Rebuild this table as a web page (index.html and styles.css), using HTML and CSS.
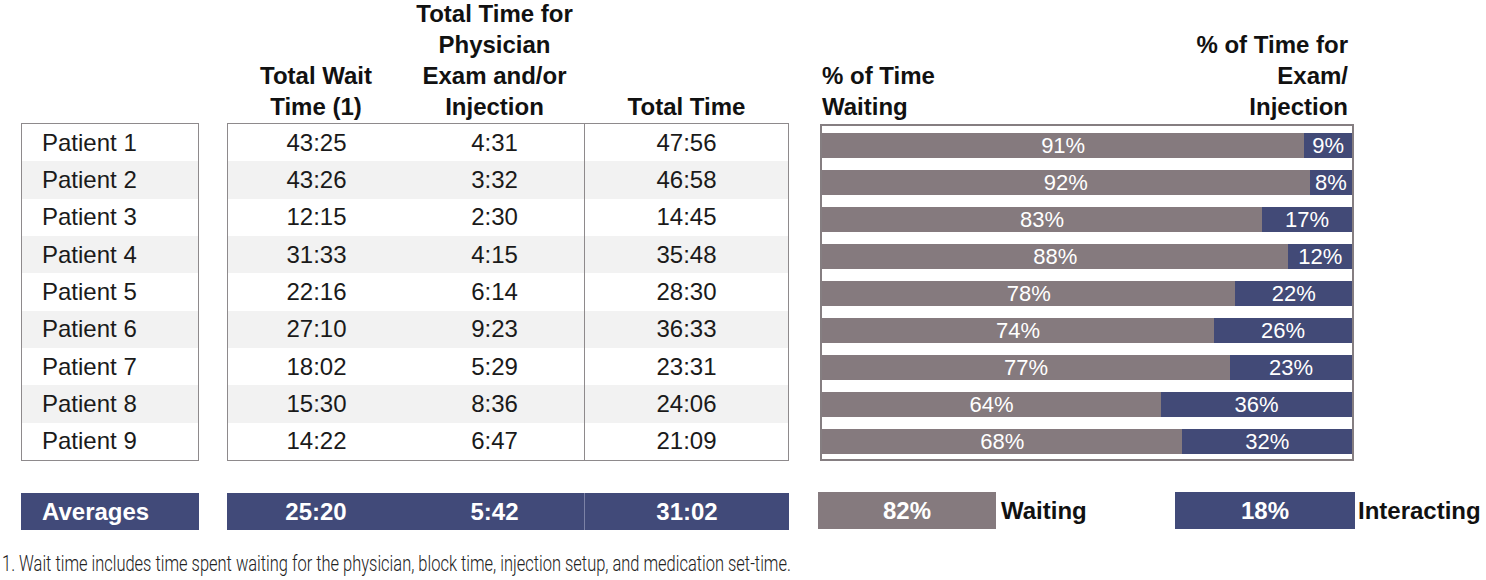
FILE: index.html
```html
<!DOCTYPE html>
<html>
<head>
<meta charset="utf-8">
<link rel="stylesheet" href="styles.css">
</head>
<body>
<div class="chart">
  <div class="col col-names">
    <div class="head"></div>
    <div class="box names">
      <div class="row">Patient 1</div>
      <div class="row">Patient 2</div>
      <div class="row">Patient 3</div>
      <div class="row">Patient 4</div>
      <div class="row">Patient 5</div>
      <div class="row">Patient 6</div>
      <div class="row">Patient 7</div>
      <div class="row">Patient 8</div>
      <div class="row">Patient 9</div>
    </div>
    <div class="avg avg-name">Averages</div>
  </div>

  <div class="col col-times">
    <div class="head head-times">
      <div class="htext c1">Total Wait<br>Time (1)</div>
      <div class="htext c2">Total Time for<br>Physician<br>Exam and/or<br>Injection</div>
      <div class="htext c3">Total Time</div>
    </div>
    <div class="box times">
      <div class="row trow"><span>43:25</span><span>4:31</span><span>47:56</span></div>
      <div class="row trow"><span>43:26</span><span>3:32</span><span>46:58</span></div>
      <div class="row trow"><span>12:15</span><span>2:30</span><span>14:45</span></div>
      <div class="row trow"><span>31:33</span><span>4:15</span><span>35:48</span></div>
      <div class="row trow"><span>22:16</span><span>6:14</span><span>28:30</span></div>
      <div class="row trow"><span>27:10</span><span>9:23</span><span>36:33</span></div>
      <div class="row trow"><span>18:02</span><span>5:29</span><span>23:31</span></div>
      <div class="row trow"><span>15:30</span><span>8:36</span><span>24:06</span></div>
      <div class="row trow"><span>14:22</span><span>6:47</span><span>21:09</span></div>
    </div>
    <div class="avg avg-times"><span>25:20</span><span>5:42</span><span>31:02</span></div>
  </div>

  <div class="col col-bars">
    <div class="head head-bars">
      <div class="htext left">% of Time<br>Waiting</div>
      <div class="htext right">% of Time for<br>Exam/<br>Injection</div>
    </div>
    <div class="box bars">
      <div class="brow"><div class="bar"><span class="wait" style="width:91%">91%</span><span class="exam">9%</span></div></div>
      <div class="brow"><div class="bar"><span class="wait" style="width:92%">92%</span><span class="exam">8%</span></div></div>
      <div class="brow"><div class="bar"><span class="wait" style="width:83%">83%</span><span class="exam">17%</span></div></div>
      <div class="brow"><div class="bar"><span class="wait" style="width:88%">88%</span><span class="exam">12%</span></div></div>
      <div class="brow"><div class="bar"><span class="wait" style="width:78%">78%</span><span class="exam">22%</span></div></div>
      <div class="brow"><div class="bar"><span class="wait" style="width:74%">74%</span><span class="exam">26%</span></div></div>
      <div class="brow"><div class="bar"><span class="wait" style="width:77%">77%</span><span class="exam">23%</span></div></div>
      <div class="brow"><div class="bar"><span class="wait" style="width:64%">64%</span><span class="exam">36%</span></div></div>
      <div class="brow"><div class="bar"><span class="wait" style="width:68%">68%</span><span class="exam">32%</span></div></div>
    </div>
    <div class="avg-bars">
      <div class="legend legend-wait"><span class="lbox gray">82%</span><span class="llabel">Waiting</span></div>
      <div class="legend legend-int"><span class="lbox navy">18%</span><span class="llabel">Interacting</span></div>
    </div>
  </div>
</div>
<p class="note"><span>1. Wait time includes time spent waiting for the physician, block time, injection setup, and medication set-time.</span></p>
</body>
</html>
```

FILE: styles.css
```css
* { box-sizing: border-box; margin: 0; padding: 0; }

body {
  margin: 0;
  width: 1486px;
  height: 580px;
  overflow: hidden;
  background: #ffffff;
  font-family: "Liberation Sans", Arial, sans-serif;
  color: #1a1a1a;
}

.chart {
  display: flex;
  padding-left: 21px;
}

.col {
  display: flex;
  flex-direction: column;
}

.col-names { width: 178px; }
.col-times { width: 562px; margin-left: 28px; }
.col-bars { width: 667px; margin-left: 29px; }

.head {
  height: 123px;
  display: flex;
  align-items: flex-end;
}

.htext {
  font-weight: bold;
  font-size: 24px;
  line-height: 31px;
  color: #111111;
  margin-bottom: 1px;
  text-align: center;
  flex: none;
}

.head-times .c1 { width: 178px; }
.head-times .c2 { width: 179px; }
.head-times .c3 { width: 205px; }

.head-bars {
  width: 536px;
  justify-content: space-between;
  padding: 0 6px 0 4px;
}

.head-bars .left { text-align: left; }
.head-bars .right { text-align: right; }

.box {
  height: 338px;
  border: 1px solid #8e8a8c;
  display: grid;
  grid-template-rows: repeat(9, 1fr);
  background: #ffffff;
}

.row {
  font-size: 24px;
  display: flex;
  align-items: center;
}

.row:nth-child(even) { background: #f2f2f2; }

.names .row { padding-left: 20px; }

.trow {
  display: grid;
  grid-template-columns: 177px 179px 1fr;
  align-items: stretch;
}

.trow span {
  display: flex;
  align-items: center;
  justify-content: center;
}

.trow span:nth-child(3) { border-left: 1px solid #8e8a8c; }

.avg {
  margin-top: 32px;
  height: 37px;
  background: #414a79;
  color: #ffffff;
  font-weight: bold;
  font-size: 24px;
}

.avg-name {
  display: flex;
  align-items: center;
  padding-left: 21px;
}

.avg-times {
  display: grid;
  grid-template-columns: 178px 179px 1fr;
}

.avg-times span {
  display: flex;
  align-items: center;
  justify-content: center;
}

.avg-times span:nth-child(3) { border-left: 1px solid #7c82a6; }

.bars {
  margin-left: 2px;
  margin-top: 1px;
  width: 534px;
  height: 337px;
  border: 2px solid #857e81;
}

.brow {
  padding-top: 7px;
}

.bar {
  height: 25px;
  display: flex;
  font-size: 22px;
  color: #ffffff;
}

.bar span {
  display: flex;
  align-items: center;
  justify-content: center;
  white-space: nowrap;
}

.bar .wait { background: #857a7e; }
.bar .exam { background: #424a77; flex: 1; }

.avg-bars {
  display: flex;
  margin-top: 31px;
  height: 37px;
}

.legend {
  display: flex;
  align-items: center;
}

.legend-wait { width: 357px; }

.lbox {
  height: 37px;
  display: flex;
  align-items: center;
  justify-content: center;
  color: #ffffff;
  font-weight: bold;
  font-size: 24px;
}

.lbox.gray { width: 178px; background: #857a7e; }
.lbox.navy { width: 180px; background: #414a79; }

.llabel {
  font-weight: bold;
  font-size: 24px;
  color: #111111;
}

.legend-wait .llabel { margin-left: 5px; }
.legend-int .llabel { margin-left: 3px; }

.note {
  margin-top: 21px;
  padding-left: 2px;
  font-family: Roboto, "Liberation Sans", sans-serif;
  font-weight: 300;
  font-size: 22px;
  line-height: 26px;
  color: #222222;
  white-space: nowrap;
}

.note span {
  display: inline-block;
  transform: scaleX(0.748);
  transform-origin: left center;
}
```
